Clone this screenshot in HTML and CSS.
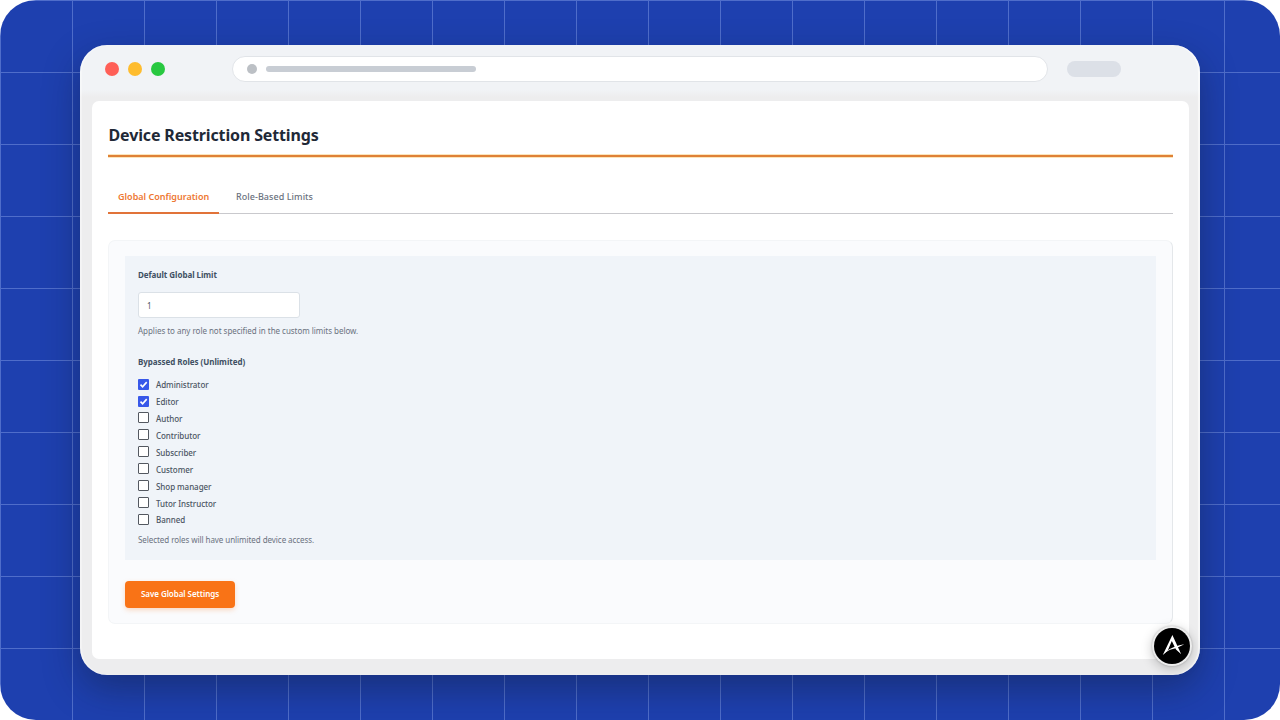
FILE: index.html
```html
<!DOCTYPE html>
<html lang="en">
<head>
<meta charset="utf-8">
<title>Device Restriction Settings</title>
<link rel="stylesheet" href="styles.css">
</head>
<body>
<div class="backdrop">
  <div class="window">
    <header class="chrome">
      <div class="lights"><i class="light red"></i><i class="light yellow"></i><i class="light green"></i></div>
      <div class="address"><i class="address-dot"></i><i class="address-line"></i></div>
      <i class="chrome-pill"></i>
    </header>
    <main class="page">
      <h1 class="title">Device Restriction Settings</h1>
      <nav class="tabs">
        <a class="tab active">Global Configuration</a>
        <a class="tab">Role-Based Limits</a>
      </nav>
      <section class="card">
        <div class="panel">
          <h2 class="label limit-label">Default Global Limit</h2>
          <div class="input">1</div>
          <p class="hint limit-hint">Applies to any role not specified in the custom limits below.</p>
          <h2 class="label roles-label">Bypassed Roles (Unlimited)</h2>
          <ul class="roles">
            <li class="role"><i class="box checked"><svg viewBox="0 0 11 11"><path d="M2.5 5.6 4.6 7.8 8.7 3.1"/></svg></i><span>Administrator</span></li>
            <li class="role"><i class="box checked"><svg viewBox="0 0 11 11"><path d="M2.5 5.6 4.6 7.8 8.7 3.1"/></svg></i><span>Editor</span></li>
            <li class="role"><i class="box"></i><span>Author</span></li>
            <li class="role"><i class="box"></i><span>Contributor</span></li>
            <li class="role"><i class="box"></i><span>Subscriber</span></li>
            <li class="role"><i class="box"></i><span>Customer</span></li>
            <li class="role"><i class="box"></i><span>Shop manager</span></li>
            <li class="role"><i class="box"></i><span>Tutor Instructor</span></li>
            <li class="role"><i class="box"></i><span>Banned</span></li>
          </ul>
          <p class="hint roles-hint">Selected roles will have unlimited device access.</p>
        </div>
        <div class="save">Save Global Settings</div>
      </section>
    </main>
    <div class="badge">
      <svg viewBox="0 0 36 36"><path d="M18.4 7 27.2 26.2 22 21.4 17.8 13 13.8 22.6 8.8 27Z"/><path d="M12 23.4Q20 17.6 30.4 16.2Q24 20 16 21.8Q12.5 23.4 8.8 27Z"/></svg>
    </div>
  </div>
</div>
</body>
</html>
```
FILE: styles.css
```css
* { box-sizing: border-box; }
body { margin: 0; background: #fff; font-family: "Noto Sans", "Open Sans", sans-serif; }
h1, h2, p, ul { margin: 0; padding: 0; }
.backdrop {
  width: 1280px; height: 720px; padding: 45px 80px; border-radius: 36px; overflow: hidden;
  background-color: #1e40af;
  background-image:
    linear-gradient(#4f6dca 1px, transparent 1px),
    linear-gradient(90deg, #4f6dca 1px, transparent 1px);
  background-size: 72px 72px;
}
.window {
  position: relative; width: 1120px; height: 630px; padding: 0 11px 0 12px; border-radius: 27px;
  background: linear-gradient(#f1f3f6 0, #f1f3f6 45px, #ededee 52px, #ededee);
  box-shadow: inset -2px 0 1px rgba(255, 255, 255, .6), inset 2px 0 1px rgba(255, 255, 255, .4), 0 14px 36px rgba(15, 23, 42, .38);
}
.chrome { display: flex; align-items: center; height: 56px; padding: 0 68px 8px 13px; }
.lights { display: flex; gap: 9px; width: 127px; }
.light { width: 14px; height: 14px; border-radius: 50%; }
.red { background: #ff5f57; }
.yellow { background: #febc2e; }
.green { background: #28c840; }
.address {
  display: flex; align-items: center; gap: 9px; width: 816px; height: 26px; padding-left: 14px;
  border: 1px solid #e1e4e8; border-radius: 13px; background: #fff;
}
.address-dot { width: 10px; height: 10px; border-radius: 50%; background: #bcc0c5; }
.address-line { width: 210px; height: 6px; border-radius: 3px; background: #c8cdd4; }
.chrome-pill { width: 54px; height: 16px; margin-left: 19px; border-radius: 8px; background: #dce0e7; }
.page { height: 558px; padding: 17px 16px 0; border-radius: 7px; background: #fff; }
.title {
  height: 39px; border-bottom: 2px solid #df8137; box-shadow: 0 1px #fbe5bc, inset 0 -1px #fbe5bc;
  padding-left: .5px; font: 700 16px/35px "Noto Sans", sans-serif; letter-spacing: -.14px; color: #1f2937;
}
.tabs { display: flex; height: 57px; padding-top: 24px; border-bottom: 1px solid #c9c9cd; }
.tab { height: 33px; padding: 0 9px 0 10px; font-size: 9px; font-weight: 500; letter-spacing: .05px; line-height: 32px; color: #6b7280; white-space: nowrap; }
.tab.active { width: 111px; margin-right: 7px; border-bottom: 2px solid #e17339; font-weight: 600; letter-spacing: 0; color: #ee7732; }
.card { height: 384px; margin-top: 26px; padding: 15px 16px 0; border: 1px solid #f3f5f7; border-right-color: #e4e7ea; border-radius: 7px; background: #fafbfd; }
.panel { height: 304px; padding: 12px 13px; background: #f0f4f9; }
.label { height: 14px; font-size: 8px; font-weight: 700; letter-spacing: -.04px; line-height: 14px; color: #405063; }
.input {
  width: 162px; height: 26px; margin-top: 10px; padding-left: 8px; border: 1px solid #dbe1e7; border-radius: 3px;
  background: #fff; font-size: 8px; line-height: 25px; color: #4b5563;
}
.hint { height: 12px; font-size: 8px; letter-spacing: -.03px; line-height: 12px; color: #6b7280; }
.limit-hint { margin-top: 7px; }
.roles-label { margin-top: 18px; }
.roles { display: grid; grid-auto-rows: 16.88px; margin-top: 6.8px; list-style: none; }
.role { display: flex; align-items: center; gap: 7px; font-size: 8px; font-weight: 500; letter-spacing: -.05px; line-height: 16px; color: #4b5563; }
.role span { padding-top: 2.4px; }
.box { width: 11px; height: 11px; border: 1px solid #535860; border-radius: 1px; background: #fff; }
.checked { border: 0; background: #3858e9; }
.box svg { display: block; width: 11px; height: 11px; fill: none; stroke: #fff; stroke-width: 1.6; }
.roles-hint { margin-top: 6px; letter-spacing: -.06px; }
.save {
  width: 110px; height: 27px; margin-top: 20.5px; border-radius: 4px; background: #f97316;
  box-shadow: 0 2px 5px rgba(249, 115, 22, .25); text-align: center;
  font-size: 8px; font-weight: 600; letter-spacing: -.05px; line-height: 26px; color: #fff;
}
.badge {
  position: absolute; right: 8px; bottom: 9px; width: 40px; height: 40px; padding: 2px; border-radius: 50%;
  background: #ededed; box-shadow: 0 3px 12px rgba(0, 0, 0, .22), 0 0 2px rgba(0, 0, 0, .25);
}
.badge svg { display: block; width: 36px; height: 36px; border-radius: 50%; background: #000; fill: #fff; }
```
